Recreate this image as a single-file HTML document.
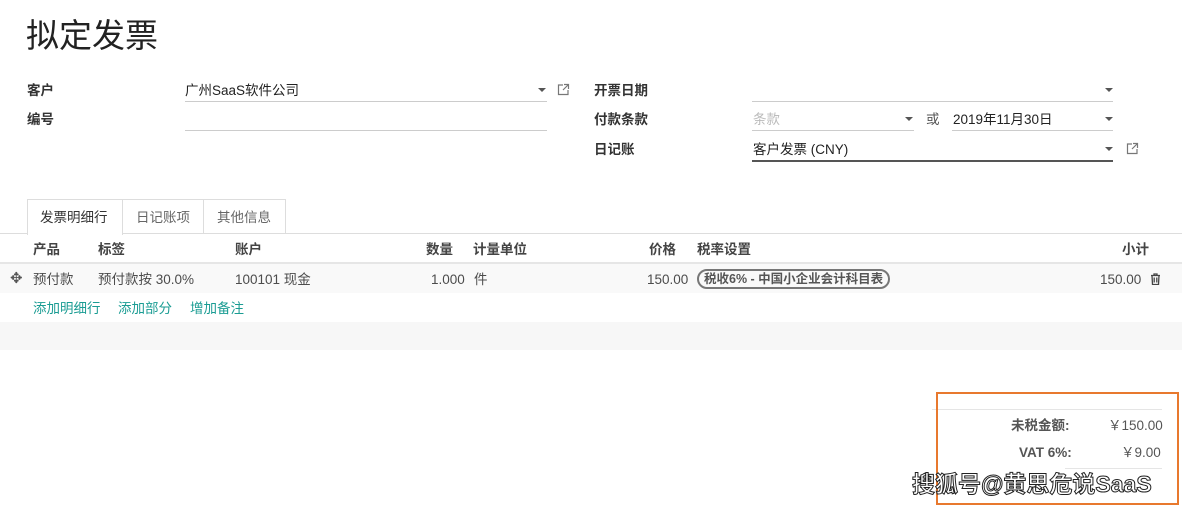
<!DOCTYPE html>
<html><head><meta charset="utf-8"><style>
body{margin:0;width:1182px;height:507px;background:#fff;position:relative;overflow:hidden;font-family:"Liberation Sans","Noto Sans CJK SC",sans-serif;font-size:13.5px;color:#4c4c4c}
.a{position:absolute;white-space:nowrap;line-height:20px}
.lbl{font-weight:bold;color:#333}
.ul{position:absolute;height:1px;background:#ccc}
.caret{position:absolute;width:0;height:0;border-left:4px solid transparent;border-right:4px solid transparent;border-top:4px solid #555}
.ext{position:absolute;width:13px;height:13px}
.th{font-weight:bold;color:#444}
.teal{color:#1a9c93}
</style></head><body>
<div class="a" style="left:26px;top:16px;font-size:33px;line-height:40px;color:#222">拟定发票</div>

<div class="a lbl" style="left:27px;top:81px">客户</div>
<div class="a lbl" style="left:27px;top:110px">编号</div>
<div class="a" style="left:185px;top:81px;color:#222">广州SaaS软件公司</div>
<div class="ul" style="left:185px;top:101px;width:362px"></div>
<div class="ul" style="left:185px;top:130px;width:362px"></div>
<div class="caret" style="left:538px;top:88px"></div>
<svg class="ext" style="left:557px;top:83px" viewBox="0 0 13 13" fill="none" stroke="#777" stroke-width="1.2"><path d="M6 2H1.5v9.5H11V7"/><path d="M7 1.5h4.5V6M11.5 1.5L6 7"/></svg>

<div class="a lbl" style="left:594px;top:81px">开票日期</div>
<div class="a lbl" style="left:594px;top:110px">付款条款</div>
<div class="a lbl" style="left:594px;top:140px">日记账</div>
<div class="ul" style="left:752px;top:101px;width:361px"></div>
<div class="caret" style="left:1105px;top:88px"></div>
<div class="a" style="left:753px;top:110px;color:#bbb">条款</div>
<div class="ul" style="left:752px;top:130px;width:162px"></div>
<div class="caret" style="left:905px;top:117px"></div>
<div class="a" style="left:926px;top:110px;color:#555">或</div>
<div class="a" style="left:953px;top:110px;color:#222">2019年11月30日</div>
<div class="ul" style="left:952px;top:130px;width:161px"></div>
<div class="caret" style="left:1105px;top:117px"></div>
<div class="a" style="left:753px;top:140px;color:#222">客户发票 (CNY)</div>
<div class="ul" style="left:752px;top:160px;width:361px;height:2px;background:#555"></div>
<div class="caret" style="left:1105px;top:147px"></div>
<svg class="ext" style="left:1126px;top:142px" viewBox="0 0 13 13" fill="none" stroke="#777" stroke-width="1.2"><path d="M6 2H1.5v9.5H11V7"/><path d="M7 1.5h4.5V6M11.5 1.5L6 7"/></svg>

<div class="ul" style="left:0;top:233px;width:1182px;background:#ddd"></div>
<div class="a" style="left:27px;top:199px;width:94px;height:35px;border:1px solid #ddd;border-bottom:none;background:#fff"></div>
<div class="a" style="left:122px;top:199px;width:81px;height:33px;border:1px solid #ddd;border-left:none;border-bottom:none"></div>
<div class="a" style="left:204px;top:199px;width:81px;height:33px;border:1px solid #ddd;border-left:none;border-bottom:none"></div>
<div class="a" style="left:40px;top:208px;color:#333">发票明细行</div>
<div class="a" style="left:136px;top:208px;color:#666">日记账项</div>
<div class="a" style="left:217px;top:208px;color:#666">其他信息</div>

<div class="a" style="left:0;top:262px;width:1182px;height:2px;background:#e6e6e6"></div>
<div class="a th" style="left:33px;top:240px">产品</div>
<div class="a th" style="left:98px;top:240px">标签</div>
<div class="a th" style="left:235px;top:240px">账户</div>
<div class="a th" style="left:426px;top:240px">数量</div>
<div class="a th" style="left:473px;top:240px">计量单位</div>
<div class="a th" style="left:649px;top:240px">价格</div>
<div class="a th" style="left:697px;top:240px">税率设置</div>
<div class="a th" style="left:1122px;top:240px">小计</div>

<div class="a" style="left:0;top:264px;width:1182px;height:29px;background:#f9f9f9"></div>
<div class="a" style="left:10px;top:269px;font-size:15px;color:#555">✥</div>
<div class="a" style="left:33px;top:270px">预付款</div>
<div class="a" style="left:98px;top:270px">预付款按 30.0%</div>
<div class="a" style="left:235px;top:270px">100101 现金</div>
<div class="a" style="left:431px;top:270px">1.000</div>
<div class="a" style="left:474px;top:270px">件</div>
<div class="a" style="left:647px;top:270px">150.00</div>
<div class="a" style="left:697px;top:269px;border:2px solid #777;border-radius:10px;padding:0 5px;font-weight:bold;font-size:12.5px;line-height:16px;color:#555">税收6% - 中国小企业会计科目表</div>
<div class="a" style="left:1100px;top:270px">150.00</div>
<svg class="a" style="left:1150px;top:273px" width="11" height="12" viewBox="0 0 11 12" fill="none" stroke="#444" stroke-width="1.3"><path d="M1 2.5h9M4 2.5V1h3v1.5M2 2.5l.5 9h6l.5-9M4.2 4.5v5M6.8 4.5v5"/></svg>

<div class="a teal" style="left:33px;top:299px">添加明细行</div>
<div class="a teal" style="left:118px;top:299px">添加部分</div>
<div class="a teal" style="left:190px;top:299px">增加备注</div>
<div class="a" style="left:0;top:322px;width:1182px;height:28px;background:#f7f7f7"></div>

<div class="ul" style="left:932px;top:409px;width:230px;background:#e5e5e5"></div>
<div class="a" style="left:1011px;top:416px;font-weight:bold;color:#555">未税金额:</div>
<div class="a" style="left:1108px;top:416px;color:#555">￥150.00</div>
<div class="a" style="left:1019px;top:443px;font-weight:bold;color:#555">VAT 6%:</div>
<div class="a" style="left:1121px;top:443px;color:#555">￥9.00</div>
<div class="ul" style="left:1065px;top:468px;width:97px;background:#e5e5e5"></div>
<div class="a" style="left:936px;top:392px;width:239px;height:109px;border:2px solid #e8792e"></div>
<div class="a" style="left:912px;top:471px;font-size:23px;line-height:26px;color:#fff;font-weight:bold;-webkit-text-stroke:1px #222">搜狐号@黄思危说SaaS</div>
</body></html>
